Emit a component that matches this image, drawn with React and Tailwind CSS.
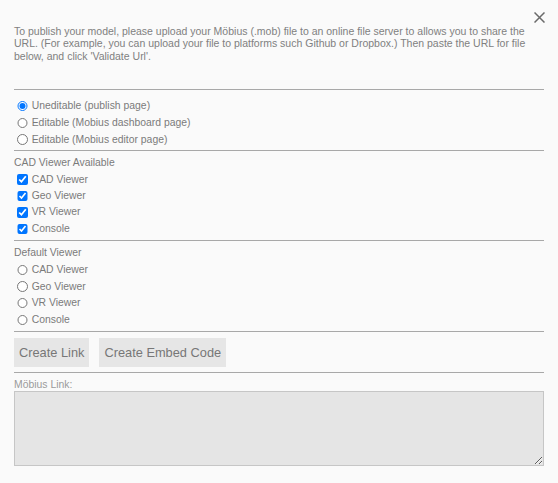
import React, { useState } from "react";

const VIEWERS = ["CAD Viewer", "Geo Viewer", "VR Viewer", "Console"];
const PUBLISH = [
  "Uneditable (publish page)",
  "Editable (Mobius dashboard page)",
  "Editable (Mobius editor page)",
];

function Rule({ className = "" }) {
  return <div className={`border-t border-[#a8a8a8] ${className}`} />;
}

export default function App() {
  const [publish, setPublish] = useState(0);
  const [avail, setAvail] = useState([true, true, true, true]);
  const [def, setDef] = useState(-1);

  return (
    <div
      className="min-h-[483px] bg-[#fafafa] px-[14px] pt-[12px] text-[10.4px] text-[#7a7a7a]"
      style={{ fontFamily: '"Liberation Sans", Arial, sans-serif' }}
    >
      <div className="flex h-[11px] justify-end">
        <button className="mr-[-1px] block h-[11px] w-[11px]">
          <svg width="11" height="11" viewBox="0 0 11 11" className="block">
            <path d="M0.5 0.5 L10.5 10.5 M10.5 0.5 L0.5 10.5" stroke="#6a6a6a" strokeWidth="1.5" fill="none" />
          </svg>
        </button>
      </div>

      <p className="mt-[2px] text-[10.5px] leading-[12.3px] text-[#808080]">
        To publish your model, please upload your Möbius (.mob) file to an online file server to allows you to share the
        URL. (For example, you can upload your file to platforms such Github or Dropbox.) Then paste the URL for file
        below, and click 'Validate Url'.
      </p>

      <Rule className="mt-[27px]" />

      <div className="mt-[8px]">
        {PUBLISH.map((label, i) => (
          <label key={label} className="flex h-[16.7px] items-center">
            <input
              type="radio"
              name="publish"
              checked={publish === i}
              onChange={() => setPublish(i)}
              className="m-0 ml-[3.3px] h-[10.4px] w-[10.4px]"
            />
            <span className="ml-[4px] leading-[12px]">{label}</span>
          </label>
        ))}
      </div>

      <Rule className="mt-[2px]" />

      <div className="mt-[6px] flex h-[12px] items-center">CAD Viewer Available</div>
      <div className="mt-[2.5px]">
        {VIEWERS.map((label, i) => (
          <label key={label} className="flex h-[16.4px] items-center">
            <input
              type="checkbox"
              checked={avail[i]}
              onChange={() => setAvail(avail.map((v, j) => (j === i ? !v : v)))}
              className="m-0 ml-[3.3px] h-[10.4px] w-[10.4px]"
            />
            <span className="ml-[4px] leading-[12px]">{label}</span>
          </label>
        ))}
      </div>

      <Rule className="mt-[3px]" />

      <div className="mt-[6px] flex h-[12px] items-center">Default Viewer</div>
      <div className="mt-[2.7px]">
        {VIEWERS.map((label, i) => (
          <label key={label} className="flex h-[16.6px] items-center">
            <input
              type="radio"
              name="default"
              checked={def === i}
              onChange={() => setDef(i)}
              className="m-0 ml-[3.3px] h-[10.4px] w-[10.4px]"
            />
            <span className="ml-[4px] leading-[12px]">{label}</span>
          </label>
        ))}
      </div>

      <Rule className="mt-[2.5px]" />

      <div className="mt-[6px] flex gap-[10px]">
        <button className="h-[29.5px] bg-[#e6e6e6] px-[5px] text-[12.8px] text-[#777]">Create Link</button>
        <button className="h-[29.5px] bg-[#e6e6e6] px-[5px] text-[12.8px] text-[#777]">Create Embed Code</button>
      </div>

      <Rule className="mt-[5px]" />

      <div className="mt-[6px] flex h-[12px] items-center text-[#9a9a9a]">Möbius Link:</div>
      <textarea
        readOnly
        className="block h-[75px] w-full border border-[#c6c6c6] bg-[#e5e5e5]"
      />
    </div>
  );
}
